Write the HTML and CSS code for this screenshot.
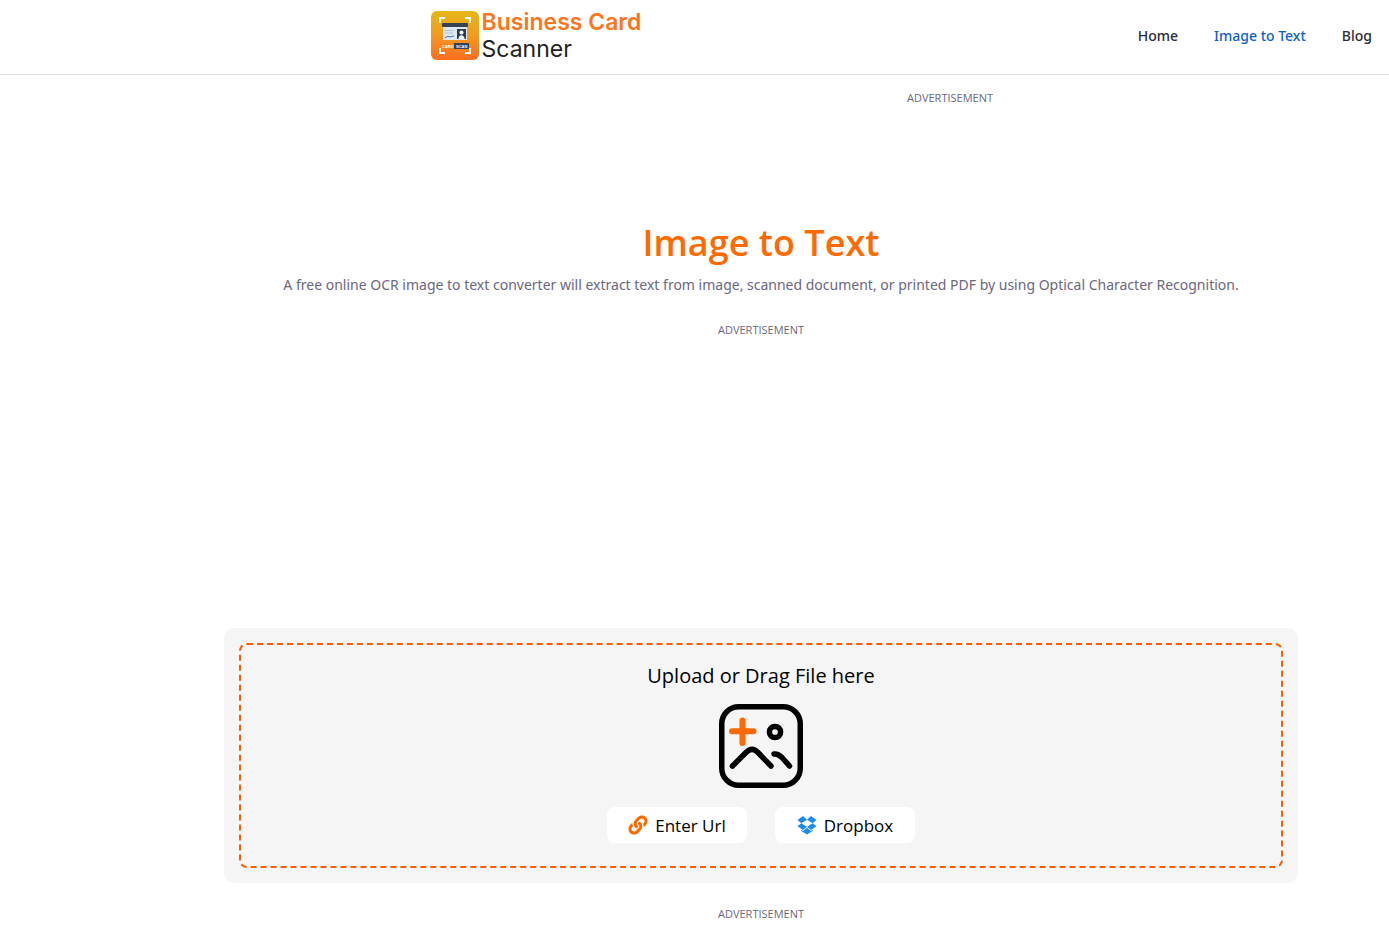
FILE: index.html
```html
<!DOCTYPE html>
<html lang="en">
<head>
<meta charset="utf-8">
<meta name="viewport" content="width=device-width, initial-scale=1">
<title>Image to Text</title>
<link rel="stylesheet" href="styles.css">
</head>
<body>
<header class="header">
  <a class="brand" href="#">
    <svg class="brand-icon" viewBox="0 0 48 49" aria-hidden="true">
      <defs>
        <linearGradient id="sun" x1="0" y1="0" x2="0" y2="1">
          <stop offset="0" stop-color="#e6b71a"/>
          <stop offset=".5" stop-color="#f39a20"/>
          <stop offset="1" stop-color="#f96e20"/>
        </linearGradient>
      </defs>
      <rect width="48" height="49" rx="6" fill="url(#sun)"/>
      <path d="M9 12V7h5M34 7h5v5M9 37v5h5M34 42h5v-5" fill="none" stroke="#fff" stroke-width="1.8"/>
      <rect x="12" y="12" width="24" height="17" fill="#dbe8f2"/>
      <rect x="11" y="12" width="26" height="4" rx="1" fill="#344254"/>
      <rect x="26" y="18" width="9" height="10" fill="#2a3a50"/>
      <circle cx="30.500" cy="21.500" r="2" fill="#fff"/>
      <path d="M27.500 28c0-5 6-5 6 0z" fill="#fff"/>
      <path d="M14 19.500h9M14 22h8" stroke="#b6c2ce" stroke-width="1"/>
      <path d="M14 27l3-2 1 1 5-1" fill="none" stroke="#506cc0" stroke-width="1"/>
      <rect x="23" y="32" width="15" height="6" fill="#344254"/>
      <text class="brand-tag" x="11" y="36.500">CARD</text>
      <text class="brand-tag" x="25" y="36.500">SCAN</text>
    </svg>
    <span class="brand-name"><strong>Business Card</strong><span>Scanner</span></span>
  </a>
  <nav class="nav">
    <a href="#">Home</a>
    <a class="active" href="#" aria-current="page">Image to Text</a>
    <a href="#">Blog</a>
  </nav>
</header>
<main class="main">
  <aside class="ad ad-top">ADVERTISEMENT</aside>
  <h1 class="title">Image to Text</h1>
  <p class="lead">A free online OCR image to text converter will extract text from image, scanned document, or printed PDF by using Optical Character Recognition.</p>
  <aside class="ad ad-middle">ADVERTISEMENT</aside>
  <section class="uploader">
    <div class="dropzone">
      <h2 class="drop-title">Upload or Drag File here</h2>
      <button class="pick" type="button" aria-label="Choose an image">
        <svg viewBox="0 0 84 84" fill="none" stroke="#000" stroke-width="5.500" stroke-linecap="round" stroke-linejoin="round" aria-hidden="true">
          <rect x="2.750" y="2.750" width="78.500" height="78.500" rx="17"/>
          <circle cx="56" cy="28" r="5.600"/>
          <path d="M13.500 62L27 48.500q6-6 12 0L52 62M55 50q4-.5 8 3.500L70.500 62"/>
          <path d="M23.500 16.500v22.500M13 27.200h21.500" stroke="#ff6a00" stroke-width="6"/>
        </svg>
      </button>
      <div class="sources">
        <button class="source" type="button">
          <svg viewBox="-12 -12 536 536" fill="#ff6a00" aria-hidden="true"><path d="M326.612 185.391c59.747 59.809 58.927 155.698.36 214.590-.11.12-.24.25-.36.37l-67.200 67.200c-59.270 59.270-155.699 59.262-214.960 0-59.270-59.260-59.270-155.700 0-214.960l37.106-37.106c9.840-9.840 26.786-3.300 27.294 10.606.648 17.722 3.826 35.527 9.690 52.721 1.986 5.822.567 12.262-3.783 16.612l-13.087 13.087c-28.026 28.026-28.905 73.660-1.155 101.960 28.024 28.579 74.086 28.749 102.325.51l67.200-67.190c28.191-28.191 28.073-73.757 0-101.830-3.701-3.694-7.429-6.564-10.341-8.569a16.037 16.037 0 0 1-6.947-12.606c-.396-10.567 3.348-21.456 11.698-29.806l21.054-21.055c5.521-5.521 14.182-6.199 20.584-1.731a152.482 152.482 0 0 1 20.522 17.197zM467.547 44.449c-59.261-59.262-155.690-59.270-214.960 0l-67.200 67.200c-.12.12-.25.25-.36.37-58.566 58.892-59.387 154.781.36 214.590a152.454 152.454 0 0 0 20.521 17.196c6.402 4.468 15.064 3.789 20.584-1.731l21.054-21.055c8.350-8.350 12.094-19.239 11.698-29.806a16.037 16.037 0 0 0-6.947-12.606c-2.912-2.005-6.640-4.875-10.341-8.569-28.073-28.073-28.191-73.639 0-101.830l67.200-67.190c28.239-28.239 74.300-28.069 102.325.51 27.750 28.300 26.872 73.934-1.155 101.960l-13.087 13.087c-4.350 4.350-5.769 10.790-3.783 16.612 5.864 17.194 9.042 34.999 9.690 52.721.509 13.906 17.454 20.446 27.294 10.606l37.106-37.106c59.271-59.259 59.271-155.699.001-214.959z"/></svg>
          <span>Enter Url</span>
        </button>
        <button class="source" type="button">
          <svg viewBox="0 0 20 20" fill="#1b8bee" aria-hidden="true"><path d="M6 1l4 3.700-5.700 3.500L.5 5zM14 1l5.500 4-3.800 3.200L10 4.700zM4.300 8.200L10 11.700 6 15 .5 11.300zM15.700 8.200l3.800 3.100L14 15l-4-3.300zM10 12.800l3.900 3.100 1.800-1.100v1.200L10 19.400 4.300 16v-1.200l1.800 1.100z"/></svg>
          <span>Dropbox</span>
        </button>
      </div>
    </div>
  </section>
  <aside class="ad ad-bottom">ADVERTISEMENT</aside>
</main>
</body>
</html>
```

FILE: styles.css
```css
* { box-sizing: border-box; }

body {
  margin: 0;
  background: #fff;
  color: #6b6880;
  font-family: "Open Sans", "Noto Sans", sans-serif;
  font-size: 14px;
}

h1, h2, p { margin: 0; font-weight: 400; }
a { text-decoration: none; color: inherit; }
button { border: 0; padding: 0; font: inherit; cursor: pointer; }
svg { display: block; }

.header {
  display: flex;
  justify-content: space-between;
  align-items: center;
  height: 75px;
  padding: 0 17px 4px 31%;
  border-bottom: 1px solid #dededf;
}

.brand { display: flex; align-items: center; gap: 3px; }
.brand-icon { width: 48px; height: 49px; }
.brand-tag { font: 700 4px "Liberation Sans", sans-serif; fill: #fff; }

.brand-name {
  display: flex;
  flex-direction: column;
  padding-top: 2px;
  font-family: Inter, sans-serif;
  font-size: 23px;
  line-height: 27px;
  color: #222;
}
.brand-name strong { font-weight: 600; color: #fb7622; }

.nav {
  display: flex;
  gap: 36px;
  font-family: "Noto Sans", sans-serif;
  font-size: 14px;
  font-weight: 500;
  color: #2c2b3c;
}
.nav .active { color: #1060c9; }

.main {
  display: flex;
  flex-direction: column;
  padding: 0 91px 0 224px;
  text-align: center;
}

.ad { font-size: 11px; line-height: 16px; }
.ad-top { height: 120px; padding: 15px 0 0 378px; }
.ad-middle { height: 306px; }
.ad-bottom { padding: 23px 0 4px; }

.title {
  margin-top: 24px;
  font-size: 36px;
  line-height: 48px;
  font-weight: 600;
  color: #ff6a00;
}

.lead {
  margin: 6px 0 25px;
  font-family: "Noto Sans", sans-serif;
  font-size: 14px;
  line-height: 24px;
}

.uploader {
  padding: 15px;
  border-radius: 10px;
  background: #f5f5f5;
}

.dropzone {
  display: flex;
  flex-direction: column;
  align-items: center;
  padding: 16px 16px 23px;
  border: 2px dashed #ff5a00;
  border-radius: 8px;
}

.drop-title { font-size: 20px; line-height: 30px; color: #000; }

.pick { width: 84px; margin-top: 13px; background: none; }

.sources { display: flex; gap: 28px; margin-top: 19px; }

.source {
  display: flex;
  justify-content: center;
  align-items: center;
  gap: 7px;
  width: 140px;
  height: 36px;
  border-radius: 8px;
  background: #fff;
  color: #000;
  font-size: 17px;
}
.source svg { width: 20px; height: 20px; }
```
